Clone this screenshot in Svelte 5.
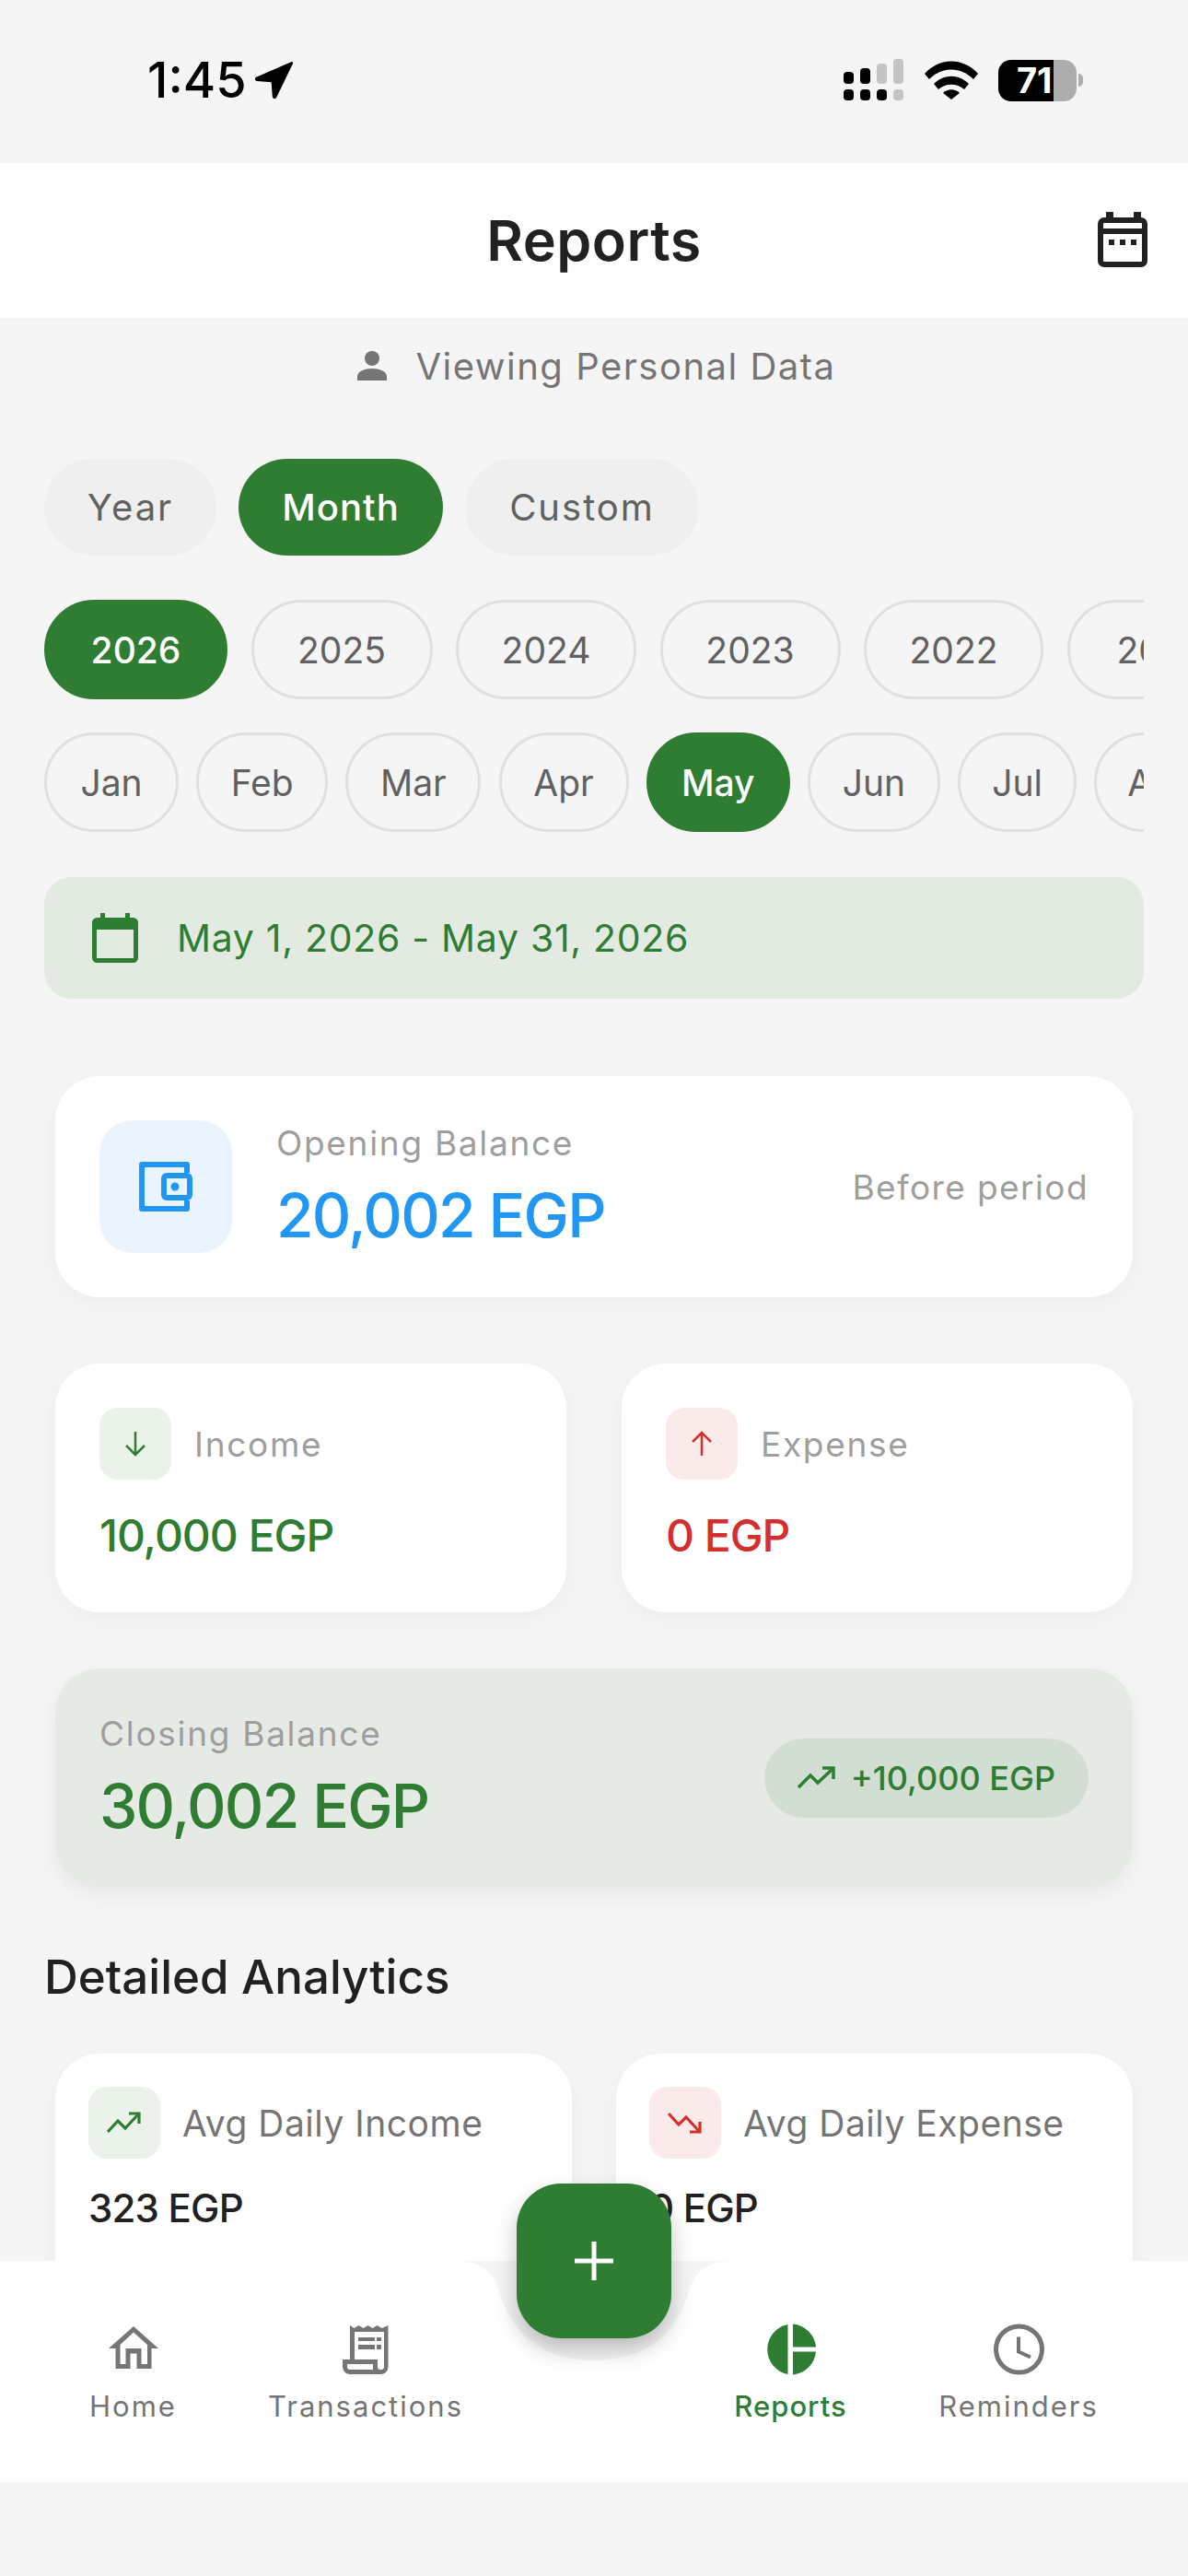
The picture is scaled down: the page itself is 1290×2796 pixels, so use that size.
<script>
  const periods = [
    { label: 'Year', w: 187 },
    { label: 'Month', w: 222, active: true },
    { label: 'Custom', w: 254 }
  ];
  const years = ['2026', '2025', '2024', '2023', '2022', '2021'];
  const yearWidths = [199, 197, 196, 196, 195, 196];
  const months = [
    ['Jan', 146], ['Feb', 143], ['Mar', 147], ['Apr', 141],
    ['May', 156], ['Jun', 144], ['Jul', 129], ['Aug', 146]
  ];
</script>

<div class="screen">
  <div class="status">
    <div class="time">1:45
      <svg class="loc" width="42" height="42" viewBox="3 2 38 38"><path d="M39 3 4 18c-2 1-1 4 1 4l14 1 1 14c0 2 3 3 4 1L40 5c.6-1.400-.4-2.500-1-2Z" fill="#000"/></svg>
    </div>
    <div class="status-right">
      <svg width="66" height="46" viewBox="0 0 66 46">
        <rect x="0" y="14" width="11" height="13" rx="4" fill="#000"/>
        <rect x="18" y="10" width="11" height="17" rx="4" fill="#000"/>
        <rect x="36" y="5" width="11" height="22" rx="4" fill="#c4c4c4"/>
        <rect x="54" y="0" width="11" height="27" rx="4" fill="#c4c4c4"/>
        <rect x="0" y="33" width="11" height="12" rx="4" fill="#000"/>
        <rect x="18" y="33" width="11" height="12" rx="4" fill="#000"/>
        <rect x="36" y="33" width="11" height="12" rx="4" fill="#000"/>
        <rect x="54" y="33" width="11" height="12" rx="4" fill="#c4c4c4"/>
      </svg>
      <svg width="58" height="42" viewBox="0 0 58 42">
        <path d="M0 14C16-4 42-4 58 14l-5 6C39 6 19 6 5 20Z" fill="#000"/>
        <path d="M10 25c11-11 27-11 38 0l-5 6c-8-7-20-7-28 0Z" fill="#000"/>
        <path d="M20 35c5-5 13-5 18 0l-9 7Z" fill="#000"/>
      </svg>
      <div class="battery">
        <div class="bat-body"><span>71</span></div>
        <div class="bat-tip"></div>
      </div>
    </div>
  </div>

  <header class="header">
    <h1>Reports</h1>
    <svg class="cal-btn" width="54" height="60" viewBox="0 0 54 60" fill="none">
      <path d="M9 0h8v8H9ZM39 0h8v8h-8Z" fill="#212121"/>
      <rect x="3" y="9" width="48" height="48" rx="4" stroke="#212121" stroke-width="6"/>
      <path d="M3 21h48" stroke="#212121" stroke-width="6"/>
      <path d="M12 30h6v6h-6ZM24 30h6v6h-6ZM36 30h6v6h-6Z" fill="#212121"/>
    </svg>
  </header>

  <main class="content">
    <div class="viewing">
      <svg width="34" height="34" viewBox="0 0 34 34"><circle cx="17" cy="9" r="8" fill="#757575"/><path d="M1 33v-4c0-6 8-9 16-9s16 3 16 9v4Z" fill="#757575"/></svg>
      <span>Viewing Personal Data</span>
    </div>

    <div class="chips periods">
      {#each periods as p}
        <div class="chip filled" class:active={p.active} style="width: {p.w}px">{p.label}</div>
      {/each}
    </div>

    <div class="chips years">
      {#each years as y, i}
        <div class="chip outline" class:active={i === 0} style="width: {yearWidths[i]}px">{y}</div>
      {/each}
    </div>

    <div class="chips months">
      {#each months as [m, w]}
        <div class="chip outline" class:active={m === 'May'} style="width: {w}px">{m}</div>
      {/each}
    </div>

    <div class="range">
      <svg width="50" height="54" viewBox="0 0 50 54" fill="none">
        <path d="M9 0h5v7H9ZM36 0h5v7h-5Z" fill="#2e7d32"/>
        <rect x="2.500" y="7.500" width="45" height="44" rx="3" stroke="#2e7d32" stroke-width="5"/>
        <path d="M2 14h46" stroke="#2e7d32" stroke-width="8"/>
      </svg>
      <span>May 1, 2026 - May 31, 2026</span>
    </div>

    <section class="card opening">
      <div class="icon-lg">
        <svg width="58" height="54" viewBox="0 0 58 54" fill="none" stroke="#2196f3" stroke-width="6" stroke-linejoin="round">
          <path d="M52 12V3H3v48h49v-9"/>
          <rect x="27" y="15" width="28" height="24" rx="3"/>
          <circle cx="39" cy="27" r="4.500" fill="#2196f3" stroke="none"/>
        </svg>
      </div>
      <div class="opening-text">
        <div class="label">Opening Balance</div>
        <div class="value-lg blue">20,002 EGP</div>
      </div>
      <div class="before">Before period</div>
    </section>

    <div class="pair">
      <section class="card flow">
        <div class="flow-head">
          <div class="icon-sm green-bg">
            <svg width="30" height="30" viewBox="0 0 30 30" fill="none" stroke="#2e7d32" stroke-width="2.500"><path d="M15 2v25M5 17l10 10 10-10"/></svg>
          </div>
          <span class="label">Income</span>
        </div>
        <div class="value-md green">10,000 EGP</div>
      </section>
      <section class="card flow">
        <div class="flow-head">
          <div class="icon-sm red-bg">
            <svg width="30" height="30" viewBox="0 0 30 30" fill="none" stroke="#d32f2f" stroke-width="2.500"><path d="M15 28V3M5 13 15 3l10 10"/></svg>
          </div>
          <span class="label">Expense</span>
        </div>
        <div class="value-md red">0 EGP</div>
      </section>
    </div>

    <section class="closing">
      <div>
        <div class="label">Closing Balance</div>
        <div class="value-lg green">30,002 EGP</div>
      </div>
      <div class="delta">
        <svg width="42" height="26" viewBox="0 0 42 26" fill="none" stroke="#2e7d32" stroke-width="3.500"><path d="M1 23 14 10l8 8L38 3"/><path d="M27 2h12v12"/></svg>
        <span>+10,000 EGP</span>
      </div>
    </section>

    <h2>Detailed Analytics</h2>

    <div class="pair avg">
      <section class="card stat">
        <div class="flow-head">
          <div class="icon-sm green-bg">
            <svg width="38" height="24" viewBox="0 0 38 24" fill="none" stroke="#2e7d32" stroke-width="3.200"><path d="M1 22 12 10l8 8L34 3"/><path d="M24 2h11v11"/></svg>
          </div>
          <span class="stat-label">Avg Daily Income</span>
        </div>
        <div class="value-sm">323 EGP</div>
      </section>
      <section class="card stat">
        <div class="flow-head">
          <div class="icon-sm red-bg">
            <svg width="38" height="24" viewBox="0 0 38 24" fill="none" stroke="#d32f2f" stroke-width="3.200"><path d="M1 2l11 12 8-8 14 15"/><path d="M24 22h11V11"/></svg>
          </div>
          <span class="stat-label">Avg Daily Expense</span>
        </div>
        <div class="value-sm">0 EGP</div>
      </section>
    </div>
  </main>

  <nav class="nav">
    <svg class="nav-bg" width="1290" height="240" viewBox="0 0 1290 240">
      <path d="M0 0H493C522 0 535 12 541 30C555 80 590 108 645 108C700 108 735 80 749 30C755 12 768 0 797 0H1290V240H0Z" fill="#fff"/>
    </svg>
    <div class="nav-side">
      <div class="tab" style="width: 145px">
        <svg width="54" height="56" viewBox="0 -3 54 56">
          <path d="M27 0 54 24H46.500V46H7.500V24H0Z" fill="#757575"/>
          <path d="M27 6.500 42 20V41H35.500V24H18.500V41H12.500V20Z" fill="#fff"/>
          <path d="M23.500 29.500H30.500V46H23.500Z" fill="#fff"/>
        </svg>
        <span>Home</span>
      </div>
      <div class="tab" style="width: 240px">
        <svg width="50" height="56" viewBox="0 0 50 54">
          <path d="M8 1l4.500 3 5-3 5 3 5-3 5 3 5-3 5 3 7-3V46a8 8 0 0 1-8 8H8a8 8 0 0 1-8-8V38H8Z" fill="#757575"/>
          <path d="M13 8H45V46a3 3 0 0 1-3 3h-1a3 3 0 0 1-3-3V38H13Z" fill="#fff"/>
          <path d="M5 43H33V49H8a3 3 0 0 1-3-3Z" fill="#fff"/>
          <path d="M17 14h18v4H17ZM17 22h18v5H17ZM37 14h5v4h-5ZM37 22h5v5h-5Z" fill="#757575"/>
        </svg>
        <span>Transactions</span>
      </div>
    </div>
    <div class="nav-side right">
      <div class="tab active" style="width: 165px">
        <svg width="55" height="56" viewBox="0 0 55 55"><path d="M24.500 .5V54.500A27.500 27.500 0 0 1 24.500 .5Z" fill="#2e7d32"/><path d="M30 .1A27.500 27.500 0 0 1 55 25H30Z" fill="#2e7d32"/><path d="M30 30H55A27.500 27.500 0 0 1 30 54.900Z" fill="#2e7d32"/></svg>
        <span>Reports</span>
      </div>
      <div class="tab" style="width: 178px">
        <svg width="55" height="56" viewBox="0 0 55 55" fill="none" stroke="#757575"><circle cx="27.500" cy="27.500" r="25" stroke-width="5"/><path d="M27 14v16l13 6" stroke-width="4"/></svg>
        <span>Reminders</span>
      </div>
    </div>
    <div class="fab">
      <svg width="42" height="42" viewBox="0 0 42 42" stroke="#fff" stroke-width="5"><path d="M21 0v42M0 21h42"/></svg>
    </div>
  </nav>
</div>

<style>
  :global(body) {
    margin: 0;
    background: #f5f5f5;
  }

  .screen {
    width: 1290px;
    height: 2796px;
    display: flex;
    flex-direction: column;
    overflow: hidden;
    background: #f5f5f5;
    font-family: "Inter", "Noto Sans", sans-serif;
    color: #212121;
    padding-bottom: 102px;
    box-sizing: border-box;
  }

  .status {
    height: 177px;
    flex: none;
    display: flex;
    justify-content: space-between;
    align-items: flex-start;
    padding: 64px 114px 0 160px;
    box-sizing: border-box;
  }

  .time {
    display: flex;
    align-items: center;
    gap: 9px;
    font-size: 54px;
    line-height: 46px;
    font-weight: 500;
    color: #000;
  }

  .status-right {
    display: flex;
    align-items: center;
    gap: 22px;
  }

  .battery {
    display: flex;
    align-items: center;
    gap: 2px;
  }

  .bat-body {
    width: 85px;
    height: 45px;
    border-radius: 14px;
    background: linear-gradient(90deg, #000 0 60px, #adadad 60px);
    color: #fff;
    font-size: 38px;
    font-weight: 700;
    line-height: 45px;
    padding-left: 20px;
    box-sizing: border-box;
    overflow: hidden;
    white-space: nowrap;
  }

  .bat-tip {
    width: 5px;
    height: 14px;
    background: #adadad;
    border-radius: 0 7px 7px 0;
  }

  .header {
    position: relative;
    height: 168px;
    flex: none;
    background: #fff;
    display: flex;
    align-items: center;
    justify-content: center;
  }

  .header h1 {
    margin: 0;
    font-size: 61px;
    font-weight: 600;
    letter-spacing: 0.5px;
    color: #212121;
  }

  .cal-btn {
    position: absolute;
    right: 44px;
    top: 53px;
  }

  .content {
    flex: 1;
    min-height: 0;
    overflow: hidden;
    padding: 0 48px;
  }

  .viewing {
    height: 62px;
    margin-top: 21px;
    padding-left: 5px;
    display: flex;
    align-items: center;
    justify-content: center;
    gap: 30px;
    color: #757575;
    font-size: 40px;
    letter-spacing: 1.500px;
  }

  .chips {
    display: flex;
    overflow: hidden;
  }

  .periods {
    gap: 24px;
    margin-top: 70px;
  }

  .years {
    gap: 25.500px;
    margin-top: 48px;
  }

  .months {
    gap: 19.200px;
    margin-top: 36px;
  }

  .chip {
    flex: none;
    box-sizing: border-box;
    display: flex;
    align-items: center;
    justify-content: center;
    font-size: 39px;
    color: #616161;
    border-radius: 54px;
  }

  .chip.filled {
    height: 105px;
    background: #efefef;
    font-size: 40px;
    letter-spacing: 2px;
  }

  .chip.filled.active {
    letter-spacing: 1px;
  }

  .chip.outline {
    height: 108px;
    border: 3px solid #e0e0e0;
  }

  .chip.active {
    background: #2e7d32;
    border-color: #2e7d32;
    color: #fff;
    font-weight: 500;
  }

  .range {
    margin-top: 49px;
    height: 132px;
    border-radius: 30px;
    background: #e3eae2;
    display: flex;
    align-items: center;
    gap: 42px;
    padding-left: 52px;
    color: #2e7d32;
    font-size: 41px;
    letter-spacing: 0.700px;
  }

  .card {
    background: #fff;
    border-radius: 48px;
    box-shadow: 0 6px 24px rgba(0, 0, 0, 0.04);
    box-sizing: border-box;
  }

  .opening {
    margin: 84px 12px 0;
    height: 240px;
    display: flex;
    align-items: center;
    padding: 0 48px;
  }

  .icon-lg {
    width: 144px;
    height: 144px;
    border-radius: 36px;
    background: #e9f4fe;
    display: flex;
    align-items: center;
    justify-content: center;
    flex: none;
  }

  .opening-text {
    margin-left: 48px;
    flex: 1;
  }

  .label {
    font-size: 37px;
    color: #9e9e9e;
    letter-spacing: 1.700px;
  }

  .value-lg {
    font-size: 66px;
    font-weight: 500;
    line-height: 80px;
    margin-top: 16px;
    letter-spacing: -1.800px;
  }

  .before {
    font-size: 37px;
    color: #9e9e9e;
    letter-spacing: 1.400px;
  }

  .blue { color: #2196f3; }
  .green { color: #2e7d32; }
  .red { color: #d32f2f; }

  .pair {
    display: flex;
    gap: 60px;
    margin: 72px 12px 0;
  }

  .flow {
    flex: 1;
    height: 270px;
    padding: 48px;
  }

  .flow-head {
    display: flex;
    align-items: center;
    gap: 25px;
  }

  .icon-sm {
    width: 78px;
    height: 78px;
    border-radius: 20px;
    display: flex;
    align-items: center;
    justify-content: center;
    flex: none;
  }

  .green-bg { background: #eaf2ea; }
  .red-bg { background: #faeaea; }

  .value-md {
    margin-top: 31px;
    font-size: 48px;
    font-weight: 500;
    line-height: 60px;
    letter-spacing: -1px;
  }

  .closing {
    margin: 61px 12px 0;
    height: 237px;
    border-radius: 48px;
    background: #e5eae5;
    box-shadow: 0 8px 24px rgba(0, 0, 0, 0.06);
    display: flex;
    align-items: center;
    justify-content: space-between;
    padding: 0 48px;
    box-sizing: border-box;
  }

  .delta {
    display: flex;
    align-items: center;
    gap: 16px;
    height: 86px;
    padding: 0 36px;
    border-radius: 43px;
    background: #d2ded2;
    color: #2e7d32;
    font-size: 36px;
    font-weight: 500;
  }

  h2 {
    margin: 66px 0 0;
    font-size: 51px;
    line-height: 64px;
    font-weight: 500;
    color: #212121;
  }

  .avg {
    gap: 48px;
    margin-top: 51px;
  }

  .stat {
    flex: 1;
    height: 300px;
    padding: 36px;
  }

  .stat .flow-head {
    gap: 24px;
  }

  .stat-label {
    font-size: 39px;
    color: #757575;
    letter-spacing: 0.500px;
    white-space: nowrap;
  }

  .value-sm {
    margin-top: 28px;
    font-size: 42px;
    font-weight: 500;
    letter-spacing: -0.800px;
    color: #212121;
  }

  .nav {
    position: relative;
    flex: none;
    height: 240px;
    display: flex;
    justify-content: space-between;
    padding: 0 95px 0 72px;
    box-sizing: border-box;
  }

  .nav-bg {
    position: absolute;
    left: 0;
    top: 0;
  }

  .nav-side {
    position: relative;
    display: flex;
    align-items: flex-start;
    gap: 60px;
    padding-top: 68px;
  }

  .nav-side.right {
    gap: 76px;
  }

  .tab {
    display: flex;
    flex-direction: column;
    align-items: center;
    gap: 15px;
    font-size: 31px;
    color: #757575;
    letter-spacing: 2px;
    white-space: nowrap;
  }

  .tab.active {
    color: #2e7d32;
    font-weight: 500;
    letter-spacing: 1px;
  }

  .fab {
    position: absolute;
    left: 561px;
    top: -84px;
    width: 168px;
    height: 168px;
    border-radius: 48px;
    background: #2e7d32;
    box-shadow: 0 12px 24px rgba(0, 0, 0, 0.24);
    display: flex;
    align-items: center;
    justify-content: center;
  }
</style>
